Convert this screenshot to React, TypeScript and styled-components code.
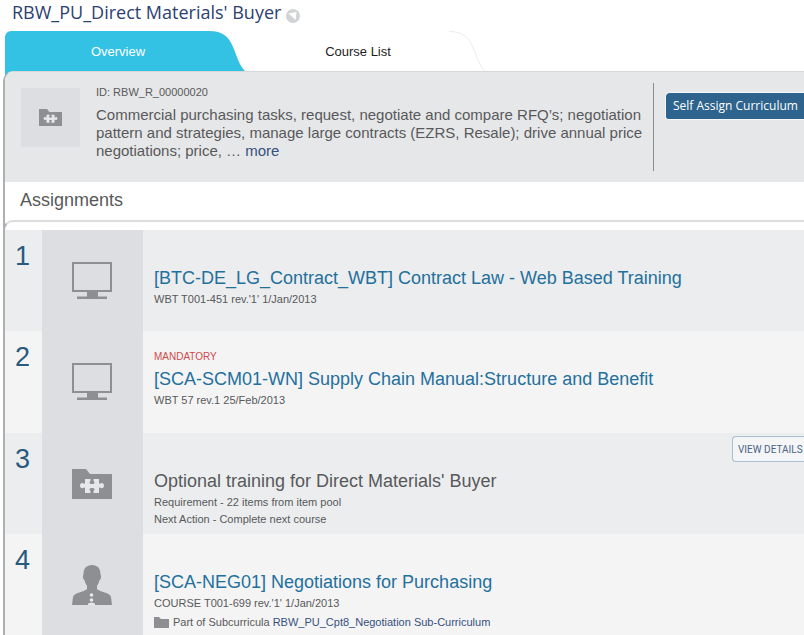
import React from "react";
import styled, { createGlobalStyle } from "styled-components";

const GlobalStyle = createGlobalStyle`
  * { box-sizing: border-box; }
  body {
    margin: 0;
    background: #fff;
    color: #58595b;
    font-family: "Liberation Sans", Arial, sans-serif;
    overflow-x: hidden;
  }
  h1, h2, h3, p, ol { margin: 0; padding: 0; font-weight: 400; }
  a { text-decoration: none; color: #35517f; }
  button { font-family: inherit; border: 0; padding: 0; margin: 0; background: none; cursor: pointer; }
  svg { display: block; flex: none; }
`;

const Page = styled.main`
  display: flex;
  flex-direction: column;
  height: 100vh;
  overflow: hidden;
  padding-left: 3px;
`;

const Heading = styled.header`
  display: flex;
  align-items: center;
  gap: 5px;
  height: 31px;
  flex: none;
  padding: 0 0 8px 9px;
`;

const Title = styled.h1`
  font: 400 18px/24px "Open Sans", sans-serif;
  color: #2c4170;
`;

const BadgeButton = styled.button`
  display: flex;
  padding-top: 8px;
`;

const Tabs = styled.nav`
  display: flex;
  flex: none;
  height: 40px;
  padding-left: 2px;
`;

const Tab = styled.button<{ $active?: boolean }>`
  display: flex;
  width: 240px;
  height: ${(p) => (p.$active ? 50 : 40)}px;
  font-size: 13px;
  line-height: 41px;
  color: ${(p) => (p.$active ? "#fff" : "#1d1d1d")};
`;

const TabLabel = styled.span<{ $active?: boolean }>`
  flex: 1;
  height: 100%;
  padding-left: 22px;
  border-top-left-radius: 6px;
  background: ${(p) => (p.$active ? "#33c1e4" : "#fff")};
`;

const Panel = styled.section`
  position: relative;
  display: flex;
  flex: 1;
  flex-direction: column;
  border-left: 2px solid #adafb1;
  border-top: 1px solid #d5d7d9;
  border-top-left-radius: 10px;
  background: #fff;
  overflow: hidden;
`;

const Summary = styled.div`
  display: flex;
  flex: none;
  min-height: 110px;
  padding: 11px 0 11px 16px;
  background: #e6e7e8;
`;

const Thumb = styled.div`
  display: flex;
  flex: none;
  align-items: center;
  justify-content: center;
  width: 59px;
  height: 59px;
  margin-top: 5px;
  background: #dddee1;
`;

const Details = styled.div`
  flex: 1;
  padding: 1px 4px 0 16px;
`;

const Code = styled.p`
  font-size: 11px;
  line-height: 16px;
`;

const Description = styled.p`
  padding-top: 6px;
  font-size: 15px;
  line-height: 18px;
`;

const Actions = styled.div`
  flex: none;
  width: 151px;
  padding: 9px 0 0 11px;
  border-left: 1px solid #8b8d90;
`;

const AssignButton = styled.button`
  width: 100%;
  height: 28px;
  padding-left: 7px;
  border: 1px solid #f5f7f9;
  border-right: 0;
  border-radius: 5px 0 0 3px;
  background: #2d638c;
  color: #fff;
  font: 500 12px/24px "Open Sans", sans-serif;
  text-align: left;
  white-space: nowrap;
`;

const SectionTitle = styled.h2`
  flex: none;
  padding: 7px 0 8px 15px;
  font-size: 18px;
  line-height: 23px;
`;

const List = styled.ol`
  flex: 1;
  padding-top: 8px;
  margin-left: -2px;
  border-top: 2px solid #dcddde;
  border-left: 2px solid #adafb1;
  border-top-left-radius: 10px;
  list-style: none;
`;

const Row = styled.li`
  display: flex;
  min-height: 101px;
  background: #ebedee;
  &:nth-child(even) { min-height: 102px; background: #f4f4f4; }
`;

const Index = styled.span`
  width: 37px;
  padding: 10px 2px 0 0;
  text-align: center;
  font-size: 27px;
  line-height: 32px;
  color: #285a80;
`;

const IconCell = styled.div`
  display: flex;
  align-items: center;
  justify-content: center;
  width: 101px;
  padding-right: 2px;
  background: #dddee2;
`;

const Body = styled.div`
  flex: 1;
  min-width: 0;
  padding: 18px 0 0 11px;
  font-size: 11px;
  line-height: 17px;
`;

const Flag = styled.p`
  height: 17px;
  font-size: 10px;
  line-height: 15px;
  color: #cf4a4c;
`;

const RowTitle = styled.h3<{ $plain?: boolean }>`
  font-size: 18px;
  line-height: 26px;
  color: ${(p) => (p.$plain ? "#58595b" : "#24709c")};
  a { color: inherit; }
`;

const Sub = styled.p`
  display: flex;
  align-items: center;
  gap: 4px;
  padding-top: 2px;
`;

const DetailsButton = styled.button`
  align-self: flex-start;
  width: 72px;
  height: 26px;
  margin-top: 3px;
  padding-left: 5px;
  border: 1px solid #a9bdd3;
  border-right: 0;
  border-radius: 4px 0 0 4px;
  background: #f3f5f7;
  color: #4d6486;
  font-family: Roboto, sans-serif;
  font-size: 10px;
  text-align: left;
  white-space: nowrap;
`;

const GREY = "#8d8f92";

const Puzzle = ({ width }: { width: number }) => (
  <svg width={width} viewBox="0 0 40 30" fill={GREY} aria-hidden="true">
    <path d="M0 0h14l4 5h22v25H0z" />
    <path
      fill="#e6e7ea"
      d="M13 10h5.500v1.500c0 1-1 1-1 2s1 1.500 2.500 1.500 2.500-.5 2.500-1.500-1-1-1-2V10H27v4.500c.5.700 1.200.2 2-.2 1.500-.7 3 .7 3 2.400s-1.500 3.100-3 2.400c-.8-.4-1.500-.9-2-.2V24h-5.500v-1.500c0-1 1-1 1-2S21.500 19 20 19s-2.500.5-2.500 1.500 1 1 1 2V24H13v-5.100c-.5-.7-1.200-.2-2 .2-1.500.7-3-.7-3-2.400s1.500-3.100 3-2.400c.8.4 1.500.9 2 .2z"
    />
  </svg>
);

const Monitor = () => (
  <svg width="40" height="38" viewBox="0 0 40 38" fill={GREY} aria-hidden="true">
    <path fillRule="evenodd" d="M0 0h40v30H0zM2 2v26h36V2z" />
    <path d="M15 30h11v4.500h9V37H5v-2.500h10z" />
  </svg>
);

const Person = () => (
  <svg width="40" height="40" viewBox="0 0 40 40" fill={GREY} aria-hidden="true">
    <path d="M20 0c5.500 0 8.500 3.500 8.500 9 0 1 .8 1.500.5 3.500-.2 1.500-1 2.500-1.700 3-.4 2.500-1.300 4-2.300 5v3.500c3 3 13 3.500 14 8l1 8H0l1-8c1-4.500 11-5 14-8v-3.500c-1-1-1.900-2.500-2.300-5-.7-.5-1.500-1.500-1.700-3-.3-2 .5-2.500.5-3.500 0-5.500 3-9 8.500-9z" />
    <g fill="#e6e7ea">
      <circle cx="19.500" cy="30" r="1.800" />
      <circle cx="19.500" cy="35" r="1.800" />
      <path d="M16 40v-1.500l3.500-1 3.500 1V40z" />
    </g>
  </svg>
);

const Folder = () => (
  <svg width="15" height="11" viewBox="0 0 15 11" fill={GREY} aria-hidden="true">
    <path d="M0 0h5l2 2h8v9H0z" />
  </svg>
);

const items = [
  { icon: <Monitor />, title: "[BTC-DE_LG_Contract_WBT] Contract Law - Web Based Training", meta: ["WBT T001-451 rev.'1' 1/Jan/2013"] },
  { icon: <Monitor />, flag: "MANDATORY", title: "[SCA-SCM01-WN] Supply Chain Manual:Structure and Benefit", meta: ["WBT 57 rev.1 25/Feb/2013"] },
  {
    icon: <Puzzle width={40} />,
    title: "Optional training for Direct Materials' Buyer",
    plain: true,
    details: true,
    meta: ["Requirement - 22 items from item pool", "Next Action - Complete next course"],
  },
  {
    icon: <Person />,
    title: "[SCA-NEG01] Negotiations for Purchasing",
    meta: ["COURSE T001-699 rev.'1' 1/Jan/2013"],
    sub: "RBW_PU_Cpt8_Negotiation Sub-Curriculum",
  },
];

export default function App() {
  return (
    <>
      <GlobalStyle />
      <Page>
        <Heading>
          <Title>RBW_PU_Direct Materials' Buyer</Title>
          <BadgeButton aria-label="Options">
            <svg width="14" height="14" viewBox="0 0 14 14" aria-hidden="true">
              <circle cx="7" cy="7" r="7" fill="#d2d3d4" />
              <path d="M2.500 4.500 10.500 3 9.500 11 6.500 8z" fill="#fff" />
            </svg>
          </BadgeButton>
        </Heading>
        <Tabs>
          <Tab $active>
            <TabLabel $active>Overview</TabLabel>
            <svg width="36" height="40" viewBox="0 0 36 40" aria-hidden="true">
              <path d="M0 0c14 0 20 6 24 16 4 9 6 18 12 24H0z" fill="#33c1e4" />
            </svg>
          </Tab>
          <Tab>
            <TabLabel>Course List</TabLabel>
            <svg width="36" height="40" viewBox="0 0 36 40" aria-hidden="true">
              <path d="M0 .5c14 0 20 6 24 16 4 9 6 18 12 24" fill="none" stroke="#ececec" />
            </svg>
          </Tab>
        </Tabs>
        <Panel>
          <Summary>
            <Thumb>
              <Puzzle width={23} />
            </Thumb>
            <Details>
              <Code>ID: RBW_R_00000020</Code>
              <Description>
                Commercial purchasing tasks, request, negotiate and compare RFQ’s; negotiation pattern and strategies,
                manage large contracts (EZRS, Resale); drive annual price negotiations; price, … <a href="#more">more</a>
              </Description>
            </Details>
            <Actions>
              <AssignButton>Self Assign Curriculum</AssignButton>
            </Actions>
          </Summary>
          <SectionTitle>Assignments</SectionTitle>
          <List>
            {items.map((item, i) => (
              <Row key={item.title}>
                <Index>{i + 1}</Index>
                <IconCell>{item.icon}</IconCell>
                <Body>
                  <Flag>{item.flag}</Flag>
                  <RowTitle $plain={item.plain}>
                    {item.plain ? item.title : <a href={`#item-${i + 1}`}>{item.title}</a>}
                  </RowTitle>
                  {item.meta.map((line) => (
                    <p key={line}>{line}</p>
                  ))}
                  {item.sub && (
                    <Sub>
                      <Folder />
                      <span>
                        Part of Subcurricula <a href="#subcurriculum">{item.sub}</a>
                      </span>
                    </Sub>
                  )}
                </Body>
                {item.details && <DetailsButton>VIEW DETAILS</DetailsButton>}
              </Row>
            ))}
          </List>
        </Panel>
      </Page>
    </>
  );
}
